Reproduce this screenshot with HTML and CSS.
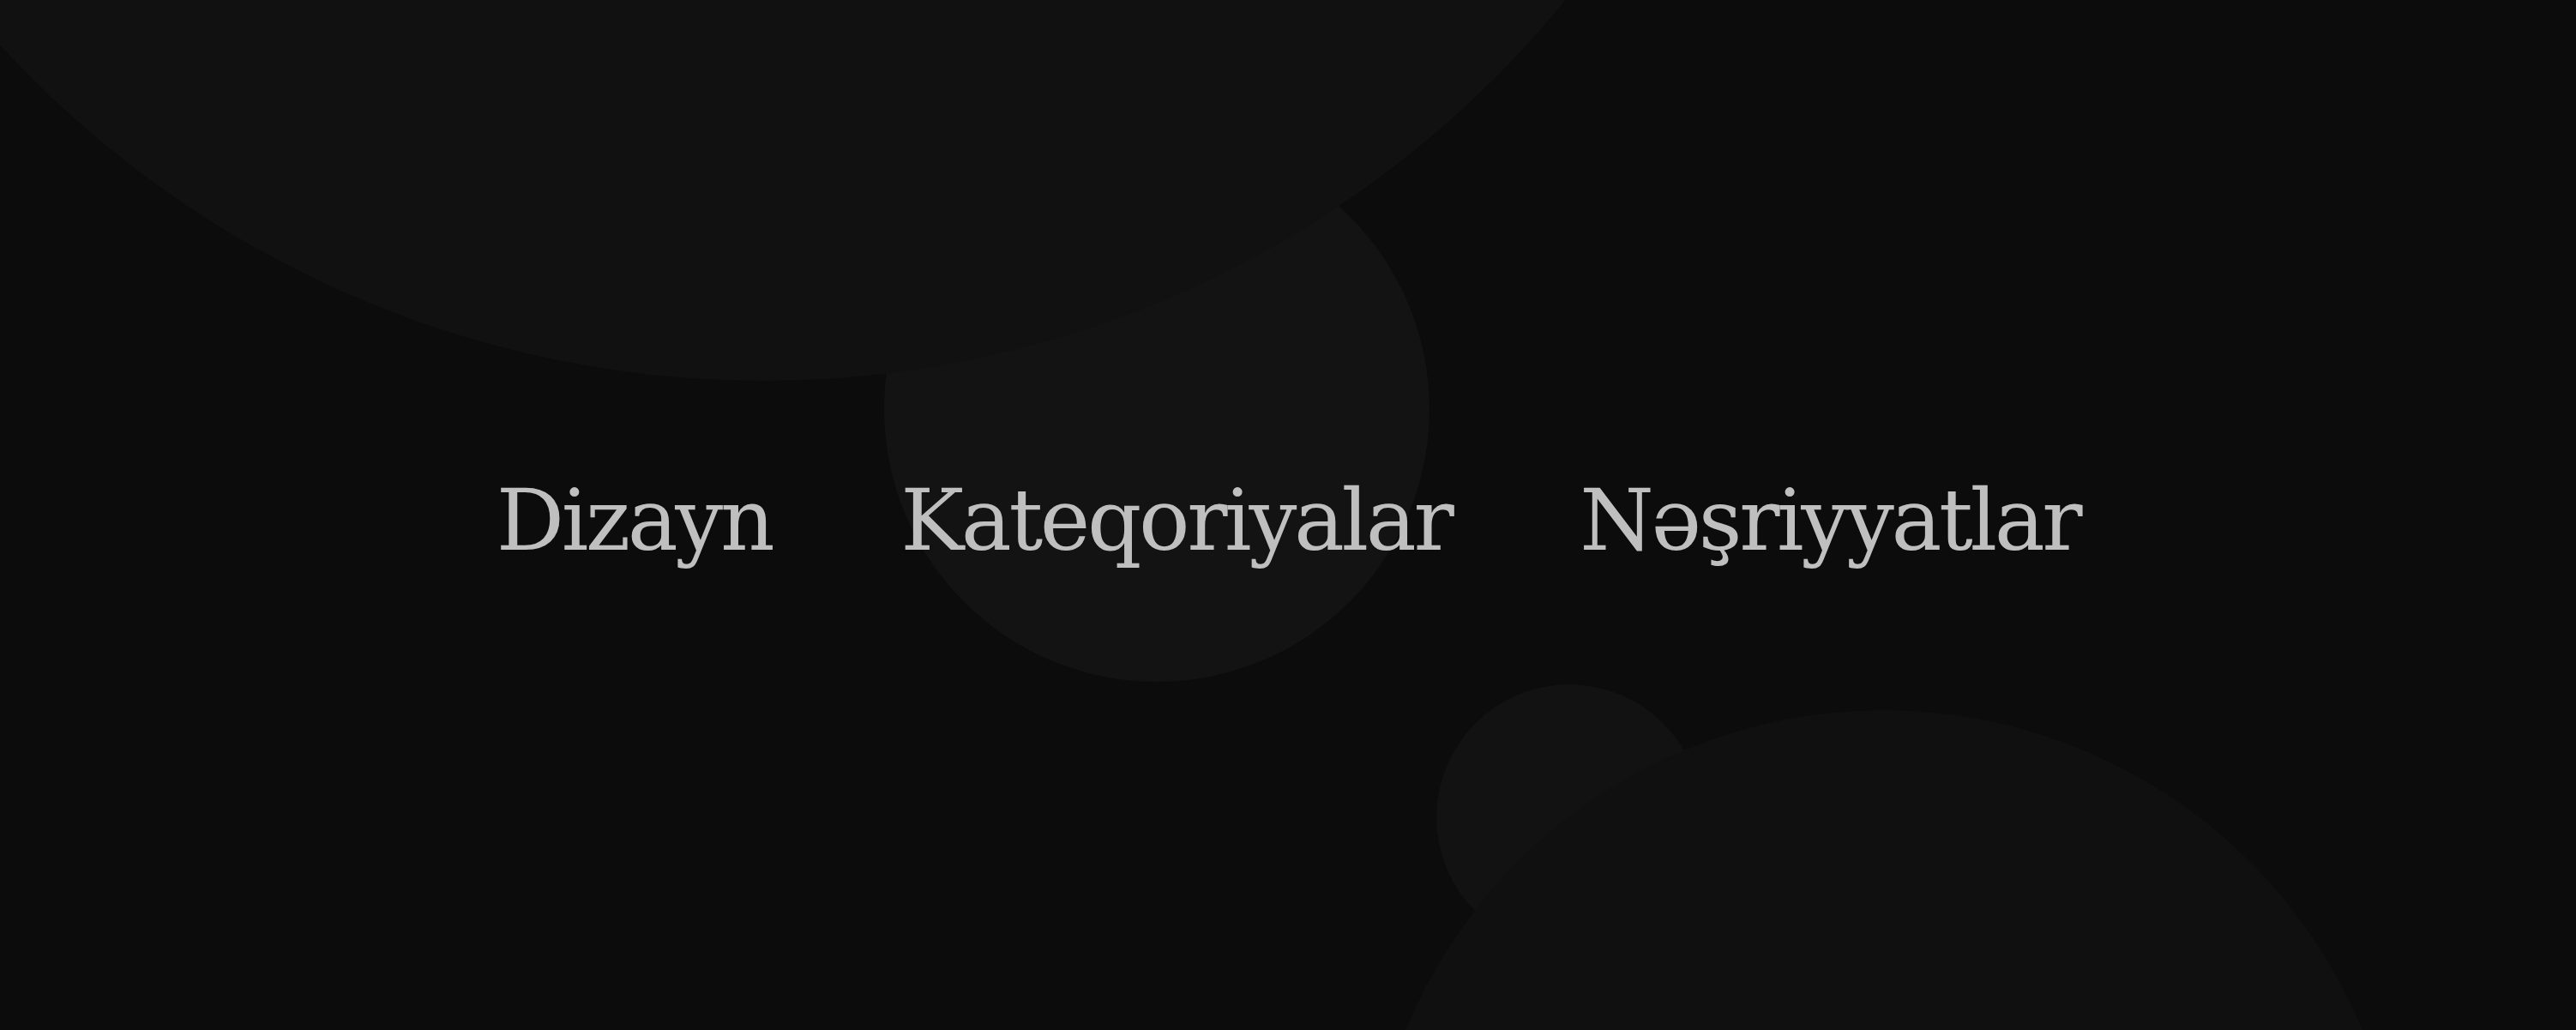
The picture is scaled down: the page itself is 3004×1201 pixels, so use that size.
FILE: index.html
```html
<!DOCTYPE html>
<html lang="az">
<head>
<meta charset="utf-8">
<title>Menyu</title>
<link rel="stylesheet" href="styles.css">
</head>
<body>
<div class="stage">
  <svg class="blobs" viewBox="0 0 3004 1201" preserveAspectRatio="none" aria-hidden="true">
    <circle class="blob-mid" cx="1349" cy="477" r="318"/>
    <circle class="blob-top" cx="890" cy="-764" r="1208"/>
    <circle class="blob-small" cx="1830" cy="953" r="155"/>
    <circle class="blob-bottom" cx="2197" cy="1432" r="604"/>
  </svg>
  <nav class="menu">
    <a class="menu-item" href="#">Dizayn</a>
    <a class="menu-item" href="#">Kateqoriyalar</a>
    <a class="menu-item" href="#">Nəşriyyatlar</a>
  </nav>
</div>
</body>
</html>
```
FILE: styles.css
```css
html, body {
  margin: 0;
  padding: 0;
  height: 100%;
  background: #0c0c0c;
  overflow: hidden;
}

.stage {
  position: relative;
  box-sizing: border-box;
  width: 100%;
  height: 100vh;
  padding-top: 12px;
  display: flex;
  align-items: center;
  justify-content: center;
}

.blobs {
  position: absolute;
  inset: 0;
  width: 100%;
  height: 100%;
  z-index: 0;
}

.blob-top { fill: #111111; }
.blob-mid { fill: #131313; }
.blob-small { fill: #121212; }
.blob-bottom { fill: #101010; }

.menu {
  position: relative;
  z-index: 1;
  display: flex;
  gap: 150px;
  font-family: "DejaVu Serif", "Liberation Serif", serif;
  font-size: 99px;
  line-height: 1;
  letter-spacing: -3.4px;
}

.menu-item {
  color: #bfbfbf;
  text-decoration: none;
}
```
